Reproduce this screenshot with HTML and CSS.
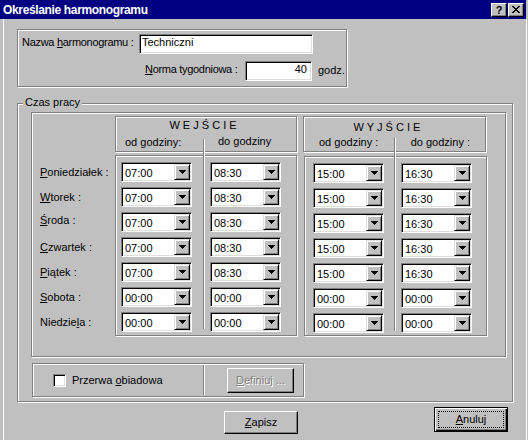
FILE: index.html
```html
<!DOCTYPE html>
<html lang="pl">
<head>
<meta charset="utf-8">
<title>Określanie harmonogramu</title>
<link rel="stylesheet" href="styles.css">
</head>
<body>
<div class="window">
  <div class="titlebar">
    <span class="title">Określanie harmonogramu</span>
    <span class="tbtns">
      <span class="tbtn tbtn-help">?</span>
      <span class="tbtn"><svg width="8" height="7" viewBox="0 0 8 7" shape-rendering="crispEdges"><path d="M0 0h2v1h-2z M6 0h2v1h-2z M1 1h2v1h-2z M5 1h2v1h-2z M2 2h4v1h-4z M3 3h2v1h-2z M2 4h4v1h-4z M1 5h2v1h-2z M5 5h2v1h-2z M0 6h2v1h-2z M6 6h2v1h-2z" fill="#000"/></svg></span>
    </span>
  </div>
  <div class="client">
    <div class="group-top">
      <div class="row1">
        <span class="lbl lbl-name">Nazwa <u>h</u>armonogramu :</span>
        <div class="field field-name">Techniczni</div>
      </div>
      <div class="row2">
        <span class="lbl lbl-norm"><u>N</u>orma tygodniowa :</span>
        <div class="field field-norm">40</div>
        <span class="unit">godz.</span>
      </div>
    </div>

    <div class="group-czas">
      <span class="legend">Czas pracy</span>
      <div class="inner">
        <div class="days">
          <div class="day"><u>P</u>oniedziałek :</div>
          <div class="day"><u>W</u>torek :</div>
          <div class="day day-up"><u>Ś</u>roda :</div>
          <div class="day"><u>C</u>zwartek :</div>
          <div class="day"><u>P</u>iątek :</div>
          <div class="day"><u>S</u>obota :</div>
          <div class="day">Niedzie<u>l</u>a :</div>
        </div>

        <div class="col col-wej">
          <div class="head">
            <div class="head-title">W E J Ś C I E</div>
            <div class="head-sub"><span class="sub-od">od godziny:</span><span class="sub-do">do godziny</span></div>
          </div>
          <div class="body">
            <div class="combo"><span class="cval">07:00</span><span class="cbtn"><svg width="7" height="4" viewBox="0 0 7 4" shape-rendering="crispEdges"><path d="M0 0h7v1h-7z M1 1h5v1h-5z M2 2h3v1h-3z M3 3h1v1h-1z" fill="#000"/></svg></span></div>
            <div class="combo"><span class="cval">08:30</span><span class="cbtn"><svg width="7" height="4" viewBox="0 0 7 4" shape-rendering="crispEdges"><path d="M0 0h7v1h-7z M1 1h5v1h-5z M2 2h3v1h-3z M3 3h1v1h-1z" fill="#000"/></svg></span></div>
            <div class="combo"><span class="cval">07:00</span><span class="cbtn"><svg width="7" height="4" viewBox="0 0 7 4" shape-rendering="crispEdges"><path d="M0 0h7v1h-7z M1 1h5v1h-5z M2 2h3v1h-3z M3 3h1v1h-1z" fill="#000"/></svg></span></div>
            <div class="combo"><span class="cval">08:30</span><span class="cbtn"><svg width="7" height="4" viewBox="0 0 7 4" shape-rendering="crispEdges"><path d="M0 0h7v1h-7z M1 1h5v1h-5z M2 2h3v1h-3z M3 3h1v1h-1z" fill="#000"/></svg></span></div>
            <div class="combo"><span class="cval">07:00</span><span class="cbtn"><svg width="7" height="4" viewBox="0 0 7 4" shape-rendering="crispEdges"><path d="M0 0h7v1h-7z M1 1h5v1h-5z M2 2h3v1h-3z M3 3h1v1h-1z" fill="#000"/></svg></span></div>
            <div class="combo"><span class="cval">08:30</span><span class="cbtn"><svg width="7" height="4" viewBox="0 0 7 4" shape-rendering="crispEdges"><path d="M0 0h7v1h-7z M1 1h5v1h-5z M2 2h3v1h-3z M3 3h1v1h-1z" fill="#000"/></svg></span></div>
            <div class="combo"><span class="cval">07:00</span><span class="cbtn"><svg width="7" height="4" viewBox="0 0 7 4" shape-rendering="crispEdges"><path d="M0 0h7v1h-7z M1 1h5v1h-5z M2 2h3v1h-3z M3 3h1v1h-1z" fill="#000"/></svg></span></div>
            <div class="combo"><span class="cval">08:30</span><span class="cbtn"><svg width="7" height="4" viewBox="0 0 7 4" shape-rendering="crispEdges"><path d="M0 0h7v1h-7z M1 1h5v1h-5z M2 2h3v1h-3z M3 3h1v1h-1z" fill="#000"/></svg></span></div>
            <div class="combo"><span class="cval">07:00</span><span class="cbtn"><svg width="7" height="4" viewBox="0 0 7 4" shape-rendering="crispEdges"><path d="M0 0h7v1h-7z M1 1h5v1h-5z M2 2h3v1h-3z M3 3h1v1h-1z" fill="#000"/></svg></span></div>
            <div class="combo"><span class="cval">08:30</span><span class="cbtn"><svg width="7" height="4" viewBox="0 0 7 4" shape-rendering="crispEdges"><path d="M0 0h7v1h-7z M1 1h5v1h-5z M2 2h3v1h-3z M3 3h1v1h-1z" fill="#000"/></svg></span></div>
            <div class="combo"><span class="cval">00:00</span><span class="cbtn"><svg width="7" height="4" viewBox="0 0 7 4" shape-rendering="crispEdges"><path d="M0 0h7v1h-7z M1 1h5v1h-5z M2 2h3v1h-3z M3 3h1v1h-1z" fill="#000"/></svg></span></div>
            <div class="combo"><span class="cval">00:00</span><span class="cbtn"><svg width="7" height="4" viewBox="0 0 7 4" shape-rendering="crispEdges"><path d="M0 0h7v1h-7z M1 1h5v1h-5z M2 2h3v1h-3z M3 3h1v1h-1z" fill="#000"/></svg></span></div>
            <div class="combo"><span class="cval">00:00</span><span class="cbtn"><svg width="7" height="4" viewBox="0 0 7 4" shape-rendering="crispEdges"><path d="M0 0h7v1h-7z M1 1h5v1h-5z M2 2h3v1h-3z M3 3h1v1h-1z" fill="#000"/></svg></span></div>
            <div class="combo"><span class="cval">00:00</span><span class="cbtn"><svg width="7" height="4" viewBox="0 0 7 4" shape-rendering="crispEdges"><path d="M0 0h7v1h-7z M1 1h5v1h-5z M2 2h3v1h-3z M3 3h1v1h-1z" fill="#000"/></svg></span></div>
          </div>
          <div class="sep sep-wej"></div>
        </div>

        <div class="col col-wyj">
          <div class="head">
            <div class="head-title">W Y J Ś C I E</div>
            <div class="head-sub"><span class="sub-od">od godziny :</span><span class="sub-do">do godziny :</span></div>
          </div>
          <div class="body">
            <div class="combo"><span class="cval">15:00</span><span class="cbtn"><svg width="7" height="4" viewBox="0 0 7 4" shape-rendering="crispEdges"><path d="M0 0h7v1h-7z M1 1h5v1h-5z M2 2h3v1h-3z M3 3h1v1h-1z" fill="#000"/></svg></span></div>
            <div class="combo"><span class="cval">16:30</span><span class="cbtn"><svg width="7" height="4" viewBox="0 0 7 4" shape-rendering="crispEdges"><path d="M0 0h7v1h-7z M1 1h5v1h-5z M2 2h3v1h-3z M3 3h1v1h-1z" fill="#000"/></svg></span></div>
            <div class="combo"><span class="cval">15:00</span><span class="cbtn"><svg width="7" height="4" viewBox="0 0 7 4" shape-rendering="crispEdges"><path d="M0 0h7v1h-7z M1 1h5v1h-5z M2 2h3v1h-3z M3 3h1v1h-1z" fill="#000"/></svg></span></div>
            <div class="combo"><span class="cval">16:30</span><span class="cbtn"><svg width="7" height="4" viewBox="0 0 7 4" shape-rendering="crispEdges"><path d="M0 0h7v1h-7z M1 1h5v1h-5z M2 2h3v1h-3z M3 3h1v1h-1z" fill="#000"/></svg></span></div>
            <div class="combo"><span class="cval">15:00</span><span class="cbtn"><svg width="7" height="4" viewBox="0 0 7 4" shape-rendering="crispEdges"><path d="M0 0h7v1h-7z M1 1h5v1h-5z M2 2h3v1h-3z M3 3h1v1h-1z" fill="#000"/></svg></span></div>
            <div class="combo"><span class="cval">16:30</span><span class="cbtn"><svg width="7" height="4" viewBox="0 0 7 4" shape-rendering="crispEdges"><path d="M0 0h7v1h-7z M1 1h5v1h-5z M2 2h3v1h-3z M3 3h1v1h-1z" fill="#000"/></svg></span></div>
            <div class="combo"><span class="cval">15:00</span><span class="cbtn"><svg width="7" height="4" viewBox="0 0 7 4" shape-rendering="crispEdges"><path d="M0 0h7v1h-7z M1 1h5v1h-5z M2 2h3v1h-3z M3 3h1v1h-1z" fill="#000"/></svg></span></div>
            <div class="combo"><span class="cval">16:30</span><span class="cbtn"><svg width="7" height="4" viewBox="0 0 7 4" shape-rendering="crispEdges"><path d="M0 0h7v1h-7z M1 1h5v1h-5z M2 2h3v1h-3z M3 3h1v1h-1z" fill="#000"/></svg></span></div>
            <div class="combo"><span class="cval">15:00</span><span class="cbtn"><svg width="7" height="4" viewBox="0 0 7 4" shape-rendering="crispEdges"><path d="M0 0h7v1h-7z M1 1h5v1h-5z M2 2h3v1h-3z M3 3h1v1h-1z" fill="#000"/></svg></span></div>
            <div class="combo"><span class="cval">16:30</span><span class="cbtn"><svg width="7" height="4" viewBox="0 0 7 4" shape-rendering="crispEdges"><path d="M0 0h7v1h-7z M1 1h5v1h-5z M2 2h3v1h-3z M3 3h1v1h-1z" fill="#000"/></svg></span></div>
            <div class="combo"><span class="cval">00:00</span><span class="cbtn"><svg width="7" height="4" viewBox="0 0 7 4" shape-rendering="crispEdges"><path d="M0 0h7v1h-7z M1 1h5v1h-5z M2 2h3v1h-3z M3 3h1v1h-1z" fill="#000"/></svg></span></div>
            <div class="combo"><span class="cval">00:00</span><span class="cbtn"><svg width="7" height="4" viewBox="0 0 7 4" shape-rendering="crispEdges"><path d="M0 0h7v1h-7z M1 1h5v1h-5z M2 2h3v1h-3z M3 3h1v1h-1z" fill="#000"/></svg></span></div>
            <div class="combo"><span class="cval">00:00</span><span class="cbtn"><svg width="7" height="4" viewBox="0 0 7 4" shape-rendering="crispEdges"><path d="M0 0h7v1h-7z M1 1h5v1h-5z M2 2h3v1h-3z M3 3h1v1h-1z" fill="#000"/></svg></span></div>
            <div class="combo"><span class="cval">00:00</span><span class="cbtn"><svg width="7" height="4" viewBox="0 0 7 4" shape-rendering="crispEdges"><path d="M0 0h7v1h-7z M1 1h5v1h-5z M2 2h3v1h-3z M3 3h1v1h-1z" fill="#000"/></svg></span></div>
          </div>
          <div class="sep sep-wyj"></div>
        </div>
      </div>

      <div class="lunch">
        <div class="lunch-left">
          <span class="checkbox"></span>
          <span class="check-label">Przerwa <u>o</u>biadowa</span>
        </div>
        <div class="vsep"></div>
        <div class="btn btn-disabled"><u>D</u>efiniuj ...</div>
      </div>
    </div>

    <div class="footer">
      <div class="btn btn-save"><u>Z</u>apisz</div>
      <div class="btn btn-default"><span class="focus"><u>A</u>nuluj</span></div>
    </div>
  </div>
</div>
</body>
</html>
```

FILE: styles.css
```css
* {
  box-sizing: border-box;
  margin: 0;
  padding: 0;
}

html, body {
  background: #c0c0c0;
}

body {
  width: 528px;
  height: 440px;
  overflow: hidden;
  font: 11px/13px "Liberation Sans", Arial, sans-serif;
  color: #000;
}

u {
  text-decoration-thickness: 1px;
  text-underline-offset: 1px;
}

.window {
  width: 528px;
  height: 440px;
}

/* title bar */
.titlebar {
  width: 526px;
  height: 19px;
  background: #000080;
  display: flex;
  align-items: center;
  justify-content: space-between;
  padding: 0 2px 0 3px;
}

.title {
  color: #fff;
  font-weight: bold;
  font-size: 12px;
  letter-spacing: -0.35px;
  line-height: 14px;
  padding-top: 1px;
}

.tbtns {
  display: flex;
  gap: 1px;
}

.tbtn {
  width: 16px;
  height: 14px;
  background: #c0c0c0;
  border: 1px solid;
  border-color: #fff #000 #000 #fff;
  box-shadow: inset -1px -1px 0 #808080;
  display: flex;
  align-items: center;
  justify-content: center;
  font-weight: bold;
  font-size: 11px;
  line-height: 11px;
}

.tbtn-help {
  padding-top: 1px;
}

/* client area */
.client {
  width: 524px;
  height: 421px;
  margin-left: 3px;
  border-left: 1px solid #fff;
  border-right: 1px solid #fff;
  padding: 10px 0 0 13px;
}

.group-top,
.group-czas,
.inner,
.head,
.body,
.lunch {
  border: 1px solid #808080;
  box-shadow: 1px 1px 0 #fff, inset 1px 1px 0 #fff;
}

.group-top {
  width: 330px;
  height: 58px;
}

.row1,
.row2 {
  display: flex;
  align-items: flex-start;
  height: 20px;
}

.row1 {
  margin-top: 4px;
  padding-left: 4px;
}

.row2 {
  margin-top: 7px;
  padding-left: 127px;
}

.lbl {
  line-height: 15px;
  margin-top: 1px;
  white-space: nowrap;
  letter-spacing: -0.3px;
}

.lbl-name {
  width: 117px;
}

.lbl-norm {
  width: 100px;
}

.field {
  height: 20px;
  background: #fff;
  border: 1px solid;
  border-color: #808080 #fff #fff #808080;
  box-shadow: inset 1px 1px 0 #000, inset -1px -1px 0 #dfdfdf;
  line-height: 15px;
  padding: 0 3px 0 2px;
  white-space: nowrap;
}

.field-name {
  width: 174px;
}

.field-norm {
  width: 67px;
  text-align: right;
  padding-right: 4px;
}

.unit {
  margin-left: 6px;
  margin-top: 3px;
  line-height: 13px;
}

/* Czas pracy group */
.group-czas {
  position: relative;
  width: 496px;
  height: 299px;
  margin-top: 16px;
  padding: 8px 0 0 13px;
}

.legend {
  position: absolute;
  top: -8px;
  left: 5px;
  background: #c0c0c0;
  padding: 0 2px;
  line-height: 13px;
}

.inner {
  width: 475px;
  height: 245px;
  display: flex;
  padding-top: 3px;
}

.days {
  width: 83px;
  padding-top: 46px;
  padding-left: 8px;
  display: flex;
  flex-direction: column;
  gap: 5px;
}

.day {
  height: 20px;
  display: flex;
  align-items: center;
  white-space: nowrap;
}

.day-up {
  padding-bottom: 3px;
}

.col {
  position: relative;
}

.col-wej {
  width: 182px;
}

.col-wyj {
  width: 184px;
  margin-left: 6px;
}

.head {
  height: 36px;
}

.col-wej .head {
  padding: 2px 6px 0 0;
}

.col-wyj .head {
  margin-right: 1px;
  padding: 4px 15px 0 0;
}

.head-title {
  text-align: center;
  white-space: pre;
}

.head-sub {
  display: flex;
  white-space: nowrap;
  margin-top: 4px;
}

.col-wyj .head-sub {
  margin-top: 2px;
  padding-left: 15px;
}

.col-wej .head-sub {
  padding-left: 9px;
}

.col-wej .sub-od {
  width: 93px;
}

.col-wej .sub-do {
  margin-top: -1px;
}

.col-wyj .sub-od {
  width: 94px;
}

.body {
  display: grid;
  grid-template-columns: 71px 71px;
  grid-auto-rows: 20px;
  row-gap: 5px;
}

.col-wej .body {
  margin-top: 3px;
  height: 181px;
  padding: 6px 0 0 5px;
  column-gap: 18px;
}

.col-wyj .body {
  margin-top: 4px;
  margin-left: 1px;
  height: 180px;
  padding: 6px 0 0 8px;
  column-gap: 17px;
}

.sep {
  position: absolute;
  width: 2px;
  border-left: 1px solid #808080;
  border-right: 1px solid #fff;
}

.sep-wej {
  left: 88px;
  top: 23px;
  height: 190px;
}

.sep-wyj {
  left: 91px;
  top: 22px;
  height: 193px;
}

/* combo box */
.combo {
  width: 71px;
  height: 20px;
  display: flex;
  background: #fff;
  border: 1px solid;
  border-color: #808080 #fff #fff #808080;
  box-shadow: inset 1px 1px 0 #000, inset -1px -1px 0 #dfdfdf;
  padding: 1px;
}

.cval {
  flex: 1;
  padding: 1px 0 0 2px;
  line-height: 16px;
  height: 16px;
}

.cbtn {
  width: 16px;
  height: 16px;
  background: #c0c0c0;
  border: 1px solid;
  border-color: #dfdfdf #000 #000 #dfdfdf;
  box-shadow: inset 1px 1px 0 #fff, inset -1px -1px 0 #808080;
  display: flex;
  align-items: center;
  justify-content: center;
}

.cbtn svg {
  display: block;
}

/* lunch box */
.lunch {
  width: 272px;
  height: 34px;
  margin: 6px 0 0 1px;
  display: flex;
  align-items: center;
}

.lunch-left {
  width: 170px;
  display: flex;
  align-items: center;
  padding-left: 20px;
}

.checkbox {
  width: 13px;
  height: 13px;
  background: #fff;
  border: 1px solid;
  border-color: #808080 #fff #fff #808080;
  box-shadow: inset 1px 1px 0 #000, inset -1px -1px 0 #dfdfdf;
}

.check-label {
  margin-left: 6px;
  white-space: nowrap;
}

.vsep {
  width: 2px;
  height: 30px;
  border-left: 1px solid #808080;
  border-right: 1px solid #fff;
}

/* buttons */
.btn {
  background: #c0c0c0;
  border: 1px solid;
  border-color: #fff #000 #000 #fff;
  box-shadow: inset -1px -1px 0 #808080;
  display: flex;
  align-items: center;
  justify-content: center;
  white-space: nowrap;
}

.btn-disabled {
  width: 67px;
  height: 25px;
  margin-left: 22px;
  color: #808080;
  text-shadow: 1px 1px 0 #fff;
}

.footer {
  display: flex;
  align-items: flex-start;
}

.btn-save {
  width: 74px;
  height: 23px;
  margin: 9px 0 0 207px;
}

.btn-default {
  width: 74px;
  height: 25px;
  margin: 5px 0 0 136px;
  border: 1px solid #000;
  box-shadow: inset 1px 1px 0 #fff, inset -1px -1px 0 #000, inset -2px -2px 0 #808080;
  padding: 3px;
}

.focus {
  flex: 1;
  align-self: stretch;
  display: flex;
  align-items: center;
  justify-content: center;
  outline: 1px dotted #000;
  outline-offset: -1px;
}
```
